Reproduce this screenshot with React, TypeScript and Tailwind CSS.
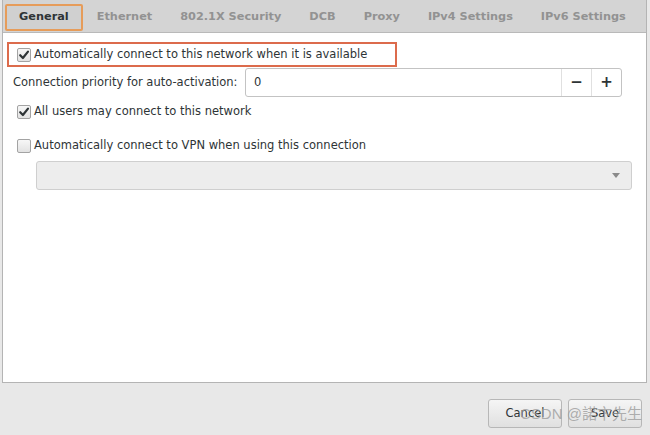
import React from 'react';

const font = "font-['DejaVu_Sans',_'Liberation_Sans',_sans-serif]";

const tabs = ['General', 'Ethernet', '802.1X Security', 'DCB', 'Proxy', 'IPv4 Settings', 'IPv6 Settings'];

const CheckBox: React.FC<{ checked?: boolean }> = ({ checked }) => (
    <span className="relative flex-shrink-0 w-[14px] h-[14px] rounded-[2px] border border-[#a3a3a3] bg-gradient-to-b from-[#f7f7f7] to-[#e2e2e2]">
        {checked && (
            <svg viewBox="0 0 14 14" className="absolute -left-px -top-px w-[14px] h-[14px]">
                <path d="M3.2 7.2 L5.9 10 L11 3.6" fill="none" stroke="#2e3436" strokeWidth={2.2} strokeLinecap="round" strokeLinejoin="round" />
            </svg>
        )}
    </span>
);

const App: React.FC = () => {
    return (
        <div className={`${font} w-[650px] h-[435px] bg-[#e8e8e8] flex flex-col text-[11.5px] text-[#2e3436] relative overflow-hidden`}>
            <div className="ml-[2px] w-[645px] h-[383px] flex flex-col bg-white border-l border-r border-b border-[#b4b4b4]">
                {/* tab bar */}
                <div className="h-[33px] flex-shrink-0 bg-[#d4d4d4] border-b border-[#b9b9b9] flex items-stretch pl-[2px] pt-[4px] pb-[1px] text-[11.3px] whitespace-nowrap">
                    {tabs.map((tab, i) => (
                        <div
                            key={tab}
                            className={`flex-shrink-0 flex items-center px-[12px] font-bold ${
                                i === 0
                                    ? 'border-2 border-[#e69c5a] rounded-[2px] text-[#2e3436] bg-[#d0d0d0]'
                                    : 'border-2 border-transparent text-[#929292]'
                            }`}
                        >
                            {tab}
                        </div>
                    ))}
                </div>

                {/* general page */}
                <div className="flex flex-col">
                    <div className="mt-[9px] ml-[4px] w-[390px] h-[25px] border-2 border-[#dc6b4c] flex items-center gap-[3px] pl-[8px]">
                        <CheckBox checked />
                        <span>Automatically connect to this network when it is available</span>
                    </div>

                    <div className="h-[29px] flex items-center pl-[10px] mt-[1px]">
                        <span className="w-[232px]">Connection priority for auto-activation:</span>
                        <div className="w-[377px] h-[29px] flex items-stretch border border-[#c3c3c3] rounded-[3px] bg-white">
                            <span className="flex-1 flex items-center pl-[8px]">0</span>
                            <span className="w-[30px] flex items-center justify-center border-l border-[#e0e0e0] text-[15px] font-bold">−</span>
                            <span className="w-[30px] flex items-center justify-center border-l border-[#e0e0e0] text-[15px] font-bold">+</span>
                        </div>
                    </div>

                    <div className="mt-[8px] ml-[14px] h-[14px] flex items-center gap-[3px]">
                        <CheckBox checked />
                        <span>All users may connect to this network</span>
                    </div>

                    <div className="mt-[20px] ml-[14px] h-[14px] flex items-center gap-[3px]">
                        <CheckBox />
                        <span>Automatically connect to VPN when using this connection</span>
                    </div>

                    <div className="mt-[8px] ml-[33px] w-[596px] h-[29px] rounded-[3px] border border-[#cfcfcf] bg-[#ededed] flex items-center justify-end pr-[11px]">
                        <svg viewBox="0 0 8 5" className="w-[8px] h-[5px]">
                            <path d="M0 0 L8 0 L4 5 Z" fill="#8a8a8a" />
                        </svg>
                    </div>
                </div>
            </div>

            {/* dialog buttons */}
            <div className="flex justify-end gap-[6px] pt-[16px] pr-[8px]">
                <button className="w-[74px] h-[29px] rounded-[3px] border border-[#b7b7b7] bg-gradient-to-b from-[#f5f5f5] to-[#e0e0e0] text-[11.5px]">
                    Cancel
                </button>
                <button className="w-[74px] h-[29px] rounded-[3px] border border-[#b7b7b7] bg-gradient-to-b from-[#f5f5f5] to-[#e0e0e0] text-[11.5px]">
                    Save
                </button>
            </div>

            <span className="absolute left-[520px] top-[403px] text-[15px] text-[#9c9c9c]/80 font-['Liberation_Sans',_'Noto_Sans_CJK_TC',_sans-serif] pointer-events-none">
                CSDN @諾卞先生
            </span>
        </div>
    );
};

export default App;
